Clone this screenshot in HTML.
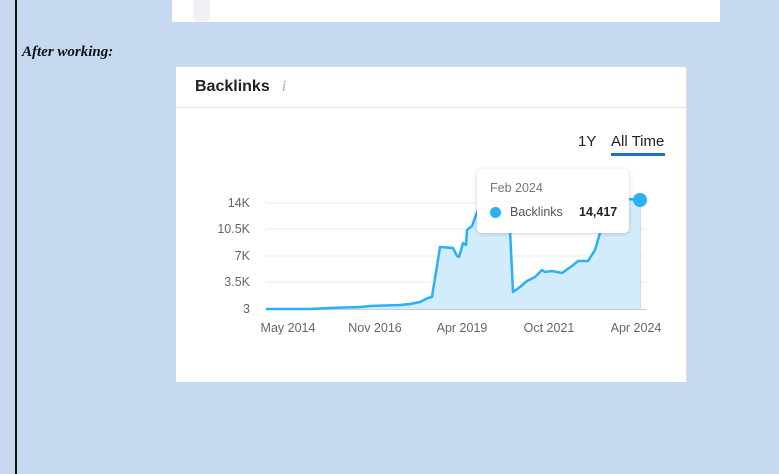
<!DOCTYPE html>
<html><head><meta charset="utf-8"><style>
body{margin:0;width:779px;height:474px;background:#c6d9f0;position:relative;overflow:hidden;font-family:"Liberation Sans",sans-serif}
.vl{position:absolute;left:15px;top:0;width:2px;height:474px;background:#111}
.top{position:absolute;left:172px;top:0;width:548px;height:22px;background:#fff}
.top i{position:absolute;left:21px;top:0;width:17px;height:22px;background:#f0f1f5;border-radius:0 0 6px 6px}
.lbl{position:absolute;left:22px;top:44px;font:bold italic 15px "Liberation Serif",serif;color:#111}
.card{position:absolute;left:176px;top:67px;width:510px;height:315px;background:#fff;border-right:1px solid #ddd}
.hd{position:absolute;left:19px;top:11px;font-weight:bold;font-size:16px;color:#222}
.hd span{font-family:"Liberation Serif",serif;font-weight:normal;font-style:italic;color:#aaa;margin-left:12px;font-size:16px}
.div{position:absolute;left:0;top:40px;width:510px;height:1px;background:#e4e4e8}
.tab{position:absolute;top:66px;font-size:15px;color:#222}
.ul{position:absolute;left:435px;top:86px;width:54px;height:3px;background:#1a73c8}
svg{position:absolute;left:0;top:0}
.tt{position:absolute;left:301px;top:102px;width:152px;height:64px;background:#fff;border-radius:5px;box-shadow:0 1px 5px rgba(0,0,0,.18)}
</style></head><body>
<div class="vl"></div>
<div class="top"><i></i></div>
<div class="lbl">After working:</div>
<div class="card">
<div class="hd">Backlinks<span>i</span></div>
<div class="div"></div>
<div class="tab" style="left:402px">1Y</div>
<div class="tab" style="left:435px">All Time</div>
<div class="ul"></div>
<svg width="510" height="315" viewBox="176 67 510 315">
<g stroke="#e8e9ee" stroke-width="1">
<line x1="266" y1="203" x2="646" y2="203"/><line x1="266" y1="229" x2="646" y2="229"/><line x1="266" y1="256" x2="646" y2="256"/><line x1="266" y1="282" x2="646" y2="282"/>
</g>
<line x1="266" y1="309.5" x2="646" y2="309.5" stroke="#ccc"/>
<line x1="640" y1="200" x2="640" y2="309" stroke="#9fb9d0"/>
<path d="M266,309 L310,309 L330,308 L360,307 L370,306 L400,305 L410,304 L420,302 L428,298 L432,297 L440,247 L453,248 L457,256 L459,257 L463,243 L466,245 L467,230 L472,226 L476,215 L480,205 L490,190 L505,190 L510,230 L513,292 L520,287 L527,281 L535,277 L542,270 L545,272 L552,271 L562,273 L572,266 L578,261 L588,261 L595,250 L600,233 L606,205 L615,198 L640,200 L640,309 Z" fill="#d3ecfc"/>
<path d="M266,309 L310,309 L330,308 L360,307 L370,306 L400,305 L410,304 L420,302 L428,298 L432,297 L440,247 L453,248 L457,256 L459,257 L463,243 L466,245 L467,230 L472,226 L476,215 L480,205 L490,190 L505,190 L510,230 L513,292 L520,287 L527,281 L535,277 L542,270 L545,272 L552,271 L562,273 L572,266 L578,261 L588,261 L595,250 L600,233 L606,205 L615,198 L640,200" fill="none" stroke="#2ab0f5" stroke-width="2.5" stroke-linejoin="round"/>
<circle cx="640" cy="200" r="7" fill="#2ab0f5"/>
<g font-family="Liberation Sans" font-size="12.5" fill="#666" text-anchor="end">
<text x="250" y="207">14K</text><text x="250" y="233">10.5K</text><text x="250" y="260">7K</text><text x="250" y="286">3.5K</text><text x="250" y="313">3</text>
</g>
<g font-family="Liberation Sans" font-size="12.5" fill="#666" text-anchor="middle">
<text x="288" y="332">May 2014</text><text x="375" y="332">Nov 2016</text><text x="462" y="332">Apr 2019</text><text x="549" y="332">Oct 2021</text><text x="636" y="332">Apr 2024</text>
</g>
</svg>
<div class="tt">
<div style="position:absolute;left:13px;top:12px;font-size:12.5px;color:#777">Feb 2024</div>
<div style="position:absolute;left:13px;top:38px;width:11px;height:11px;border-radius:50%;background:#2ab0f5"></div>
<div style="position:absolute;left:33px;top:36px;font-size:12.5px;color:#555">Backlinks</div>
<div style="position:absolute;left:102px;top:36px;font-size:12.5px;font-weight:bold;color:#222">14,417</div>
</div>
</div>
</body></html>
